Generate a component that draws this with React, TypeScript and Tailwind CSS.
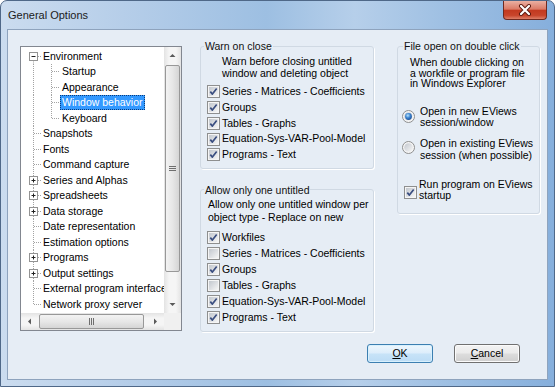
import React from 'react';

type TreeItem = {
  label: string;
  level: 0 | 1;
  box?: '+' | '-';
  selected?: boolean;
  first?: boolean;
  last?: boolean;
  lastChild?: boolean;
};

const TREE: TreeItem[] = [
  { label: 'Environment', level: 0, box: '-', first: true },
  { label: 'Startup', level: 1 },
  { label: 'Appearance', level: 1 },
  { label: 'Window behavior', level: 1, selected: true },
  { label: 'Keyboard', level: 1, lastChild: true },
  { label: 'Snapshots', level: 0 },
  { label: 'Fonts', level: 0 },
  { label: 'Command capture', level: 0 },
  { label: 'Series and Alphas', level: 0, box: '+' },
  { label: 'Spreadsheets', level: 0, box: '+' },
  { label: 'Data storage', level: 0, box: '+' },
  { label: 'Date representation', level: 0 },
  { label: 'Estimation options', level: 0 },
  { label: 'Programs', level: 0, box: '+' },
  { label: 'Output settings', level: 0, box: '+' },
  { label: 'External program interface', level: 0 },
  { label: 'Network proxy server', level: 0, last: true },
];

const dots = { stroke: '#a3a3a3', strokeWidth: 1, strokeDasharray: '1 1' };

function Gutter({ item }: { item: TreeItem }) {
  const w = item.level === 0 ? 20 : 39;
  const h = 15.5;
  const c = 7.5;
  return (
    <svg width={w} height={h} viewBox={`0 0 ${w} ${h}`} className="block shrink-0">
      <line x1={12.5} x2={12.5} y1={item.first ? c : 0} y2={item.last ? c : h} {...dots} />
      {item.level === 0 ? (
        <line x1={13} x2={20} y1={c} y2={c} {...dots} />
      ) : (
        <>
          <line x1={30.5} x2={30.5} y1={0} y2={item.lastChild ? c : h} {...dots} />
          <line x1={31} x2={39} y1={c} y2={c} {...dots} />
        </>
      )}
      {item.box && (
        <>
          <rect x={8.5} y={c - 4} width={8} height={8} fill="#ffffff" stroke="#939393" />
          <line x1={10.5} x2={14.5} y1={c} y2={c} stroke="#222" />
          {item.box === '+' && <line x1={12.5} x2={12.5} y1={c - 2} y2={c + 2} stroke="#222" />}
        </>
      )}
    </svg>
  );
}

function Arrow({ dir }: { dir: 'up' | 'down' | 'left' | 'right' }) {
  const pts = {
    up: '5.5,10 8.5,7 11.5,10',
    down: '5.5,7 8.5,10 11.5,7',
    left: '10,5.5 7,8.5 10,11.5',
    right: '7,5.5 10,8.5 7,11.5',
  }[dir];
  return (
    <svg width="17" height="17" viewBox="0 0 17 17" className="block">
      <polygon points={pts} fill="#5a5a5a" />
    </svg>
  );
}

function Grip({ vertical }: { vertical: boolean }) {
  return vertical ? (
    <svg width="7" height="6" viewBox="0 0 7 6" className="block">
      {[0.5, 2.5, 4.5].map((y) => (
        <line key={y} x1="0" x2="7" y1={y} y2={y} stroke="#6e6e6e" />
      ))}
    </svg>
  ) : (
    <svg width="6" height="7" viewBox="0 0 6 7" className="block">
      {[0.5, 2.5, 4.5].map((x) => (
        <line key={x} y1="0" y2="7" x1={x} x2={x} stroke="#6e6e6e" />
      ))}
    </svg>
  );
}

function CheckBox({ checked }: { checked: boolean }) {
  return (
    <svg width="13" height="13" viewBox="0 0 13 13" className="block shrink-0">
      <defs>
        <linearGradient id="cbg" x1="0" y1="0" x2="1" y2="1">
          <stop offset="0" stopColor="#c2c7ce" />
          <stop offset="1" stopColor="#f6f6f6" />
        </linearGradient>
      </defs>
      <rect x="0.5" y="0.5" width="12" height="12" fill="#f5f5f5" stroke="#8e8f8f" />
      <rect x="2" y="2" width="9" height="9" fill="url(#cbg)" />
      {checked && (
        <path d="M3.3 6.6 L5.4 9.1 L9.7 3.6" fill="none" stroke="#3b4f81" strokeWidth="1.7" strokeLinejoin="round" />
      )}
    </svg>
  );
}

function Radio({ on }: { on: boolean }) {
  return (
    <svg width="13" height="13" viewBox="0 0 13 13" className="block shrink-0">
      <defs>
        <linearGradient id="rbg" x1="0" y1="0" x2="1" y2="1">
          <stop offset="0" stopColor="#c2c7ce" />
          <stop offset="1" stopColor="#f7f7f7" />
        </linearGradient>
        <radialGradient id="rdot" cx="0.4" cy="0.35" r="0.7">
          <stop offset="0" stopColor="#b9e4fb" />
          <stop offset="0.5" stopColor="#3d85d1" />
          <stop offset="1" stopColor="#1a4d93" />
        </radialGradient>
      </defs>
      <circle cx="6.5" cy="6.5" r="6" fill="#f5f5f5" stroke="#8e8f8f" />
      <circle cx="6.5" cy="6.5" r="4.3" fill="url(#rbg)" />
      {on && <circle cx="6.5" cy="6.5" r="3.4" fill="url(#rdot)" />}
    </svg>
  );
}

function CheckRow({ label, checked, h }: { label: string; checked: boolean; h: string }) {
  return (
    <div className={`flex items-center gap-[2px] pl-[6px] whitespace-nowrap ${h}`}>
      <CheckBox checked={checked} />
      <span>{label}</span>
    </div>
  );
}

function TreeView() {
  return (
    <div className="mt-[6px] w-[162px] h-[285px] shrink-0 flex flex-col border border-[#828790] bg-white">
      <div className="flex h-[266px]">
        <div className="flex-1 overflow-hidden pt-[1.5px]">
          {TREE.map((item) => (
            <div key={item.label} className="flex items-center h-[15.5px] whitespace-nowrap">
              <Gutter item={item} />
              <span
                className={`h-[15px] leading-[13px] px-[1px] border ${
                  item.selected ? 'bg-[#3399ff] text-white border-dotted border-[#0b3a78]' : 'border-transparent'
                }`}
              >
                {item.label}
              </span>
            </div>
          ))}
        </div>
        <div className="w-[17px] flex flex-col bg-[linear-gradient(90deg,#e3e3e3,#f5f5f5_30%,#f5f5f5_70%,#e3e3e3)]">
          <div className="h-[17px]">
            <Arrow dir="up" />
          </div>
          <div className="flex-1 px-[1px] pt-[1px]">
            <div className="h-[207px] rounded-[2px] border border-[#989898] bg-[linear-gradient(90deg,#f3f3f3,#e7e7e7_50%,#d5d5d5)] flex items-center justify-center">
              <Grip vertical />
            </div>
          </div>
          <div className="h-[17px]">
            <Arrow dir="down" />
          </div>
        </div>
      </div>
      <div className="flex h-[17px]">
        <div className="flex-1 flex bg-[linear-gradient(180deg,#e3e3e3,#f5f5f5_30%,#f5f5f5_70%,#e3e3e3)]">
          <div className="w-[17px]">
            <Arrow dir="left" />
          </div>
          <div className="flex-1 py-[1px] pl-[1px]">
            <div className="w-[105px] h-full rounded-[2px] border border-[#989898] bg-[linear-gradient(180deg,#f3f3f3,#e7e7e7_50%,#d5d5d5)] flex items-center justify-center">
              <Grip vertical={false} />
            </div>
          </div>
          <div className="w-[17px]">
            <Arrow dir="right" />
          </div>
        </div>
        <div className="w-[17px] bg-[#f0f0f0]" />
      </div>
    </div>
  );
}

export default function App() {
  return (
    <div className="w-[555px] h-[387px] flex flex-col overflow-hidden rounded-t-[7px] border border-[#4f6888] bg-[linear-gradient(90deg,#cbdcef_0%,#b6cee9_22%,#9dbfe2_48%,#b6cfea_64%,#9fc0e3_80%,#86afdc_100%)] font-['Liberation_Sans',Arial,sans-serif] text-[10.5px] text-black">
      {/* Title bar */}
      <div className="h-[28px] flex items-center pl-[7px] pr-[7px]">
        <span className="text-[11px] text-[#1b1b1b]">General Options</span>
        <div className="ml-auto self-start w-[44px] h-[19px] rounded-b-[4px] border border-t-0 border-[#6f2a20] bg-[linear-gradient(180deg,#eab0a2_0%,#db7a66_45%,#c33a20_52%,#c8452b_80%,#dd7f68_100%)] flex items-center justify-center">
          <svg width="14" height="12" viewBox="0 0 14 12" className="block">
            <path d="M3 2 L11 10 M11 2 L3 10" stroke="#5b1a10" strokeWidth="4" strokeLinecap="round" />
            <path d="M3 2 L11 10 M11 2 L3 10" stroke="#ffffff" strokeWidth="2.2" strokeLinecap="round" />
          </svg>
        </div>
      </div>

      {/* Client area */}
      <div className="mx-[6px] h-[351px] flex flex-col border border-[#8ea3bd] bg-[#e6edf5]">
        <div className="flex items-start pt-[10px] pl-[12px]">
          <TreeView />

          {/* Middle column */}
          <div className="ml-[18px] w-[174px] flex flex-col">
            <fieldset className="border border-[#d0d9e3] rounded-[3px] shadow-[1px_1px_0_#ffffff] pb-[5px]">
              <legend className="ml-[3px] px-[1px] leading-[12px] text-[#111]">Warn on close</legend>
              <div className="pl-[21px] pt-[4px] leading-[11.5px] whitespace-nowrap">
                Warn before closing untitled
                <br />
                window and deleting object
              </div>
              <div className="mt-[5px]">
                <CheckRow h="h-[15.75px]" checked label="Series - Matrices - Coefficients" />
                <CheckRow h="h-[15.75px]" checked label="Groups" />
                <CheckRow h="h-[15.75px]" checked label="Tables - Graphs" />
                <CheckRow h="h-[15.75px]" checked label="Equation-Sys-VAR-Pool-Model" />
                <CheckRow h="h-[15.75px]" checked label="Programs - Text" />
              </div>
            </fieldset>

            <fieldset className="mt-[15px] border border-[#d0d9e3] rounded-[3px] shadow-[1px_1px_0_#ffffff] pb-[5px]">
              <legend className="ml-[3px] px-[1px] leading-[12px] text-[#111]">Allow only one untitled</legend>
              <div className="pl-[7px] pt-[2px] leading-[13px] whitespace-nowrap">
                Allow only one untitled window per
                <br />
                object type - Replace on new
              </div>
              <div className="mt-[6px]">
                <CheckRow h="h-[16px]" checked label="Workfiles" />
                <CheckRow h="h-[16px]" checked={false} label="Series - Matrices - Coefficients" />
                <CheckRow h="h-[16px]" checked label="Groups" />
                <CheckRow h="h-[16px]" checked={false} label="Tables - Graphs" />
                <CheckRow h="h-[16px]" checked label="Equation-Sys-VAR-Pool-Model" />
                <CheckRow h="h-[16px]" checked label="Programs - Text" />
              </div>
            </fieldset>
          </div>

          {/* Right column */}
          <div className="ml-[23px] w-[143px]">
            <fieldset className="border border-[#d0d9e3] rounded-[3px] shadow-[1px_1px_0_#ffffff] pb-[12px]">
              <legend className="ml-[5px] px-[1px] leading-[12px] text-[#111]">File open on double click</legend>
              <div className="pl-[12px] pt-[5px] leading-[10.7px] whitespace-nowrap">
                When double clicking on
                <br />
                a workfile or program file
                <br />
                in Windows Explorer
              </div>
              <div className="mt-[17px] flex items-start gap-[5px] pl-[4px] leading-[11px] whitespace-nowrap">
                <div className="mt-[4px]">
                  <Radio on />
                </div>
                <span>
                  Open in new EViews
                  <br />
                  session/window
                </span>
              </div>
              <div className="mt-[9px] flex items-start gap-[5px] pl-[4px] leading-[12px] whitespace-nowrap">
                <div className="mt-[4px]">
                  <Radio on={false} />
                </div>
                <span>
                  Open in existing EViews
                  <br />
                  session (when possible)
                </span>
              </div>
              <div className="mt-[18px] flex items-start gap-[2px] pl-[6px] leading-[11px] whitespace-nowrap">
                <div className="mt-[7px]">
                  <CheckBox checked />
                </div>
                <span>
                  Run program on EViews
                  <br />
                  startup
                </span>
              </div>
            </fieldset>
          </div>
        </div>

        {/* Buttons */}
        <div className="mt-auto pb-[16px] pr-[27px] flex justify-end gap-[21px]">
          <button className="w-[66px] h-[19px] rounded-[3px] border border-[#3c7fb1] bg-[linear-gradient(180deg,#eef7fd_0%,#dcedfb_48%,#c7e3f8_52%,#bcdcf5_100%)] shadow-[inset_0_0_0_1px_#d8f0fd] leading-[17px]">
            <span className="underline">O</span>K
          </button>
          <button className="w-[66px] h-[19px] rounded-[3px] border border-[#707070] bg-[linear-gradient(180deg,#f3f3f3_0%,#ebebeb_48%,#dddddd_52%,#cfcfcf_100%)] shadow-[inset_0_0_0_1px_#fbfbfb] leading-[17px]">
            <span className="underline">C</span>ancel
          </button>
        </div>
      </div>
    </div>
  );
}
